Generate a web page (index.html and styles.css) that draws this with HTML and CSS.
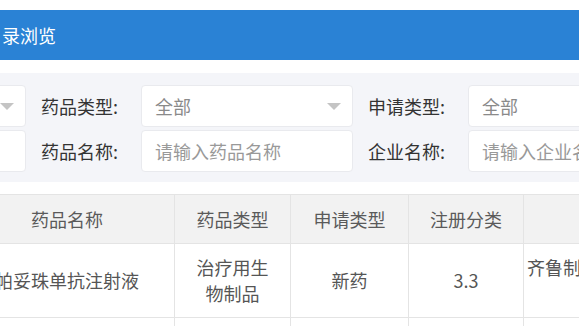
FILE: index.html
```html
<!DOCTYPE html>
<html lang="zh-CN">

<head>
    <meta charset="UTF-8">
    <meta name="viewport" content="width=device-width, initial-scale=1.0">
    <title>药品目录浏览</title>
    <link rel="stylesheet" href="styles.css">
</head>

<body>
    <div class="page">
        <div class="title-bar"><span>药品目录浏览</span></div>

        <div class="filter">
            <div class="filter-row">
                <div class="field">
                    <label>注册分类:</label>
                    <div class="select">全部<svg class="arrow" width="14" height="7" viewBox="0 0 14 7"><path d="M0 0H14L7 7Z" fill="#c4c4c4"/></svg></div>
                </div>
                <div class="field">
                    <label>药品类型:</label>
                    <div class="select">全部<svg class="arrow" width="14" height="7" viewBox="0 0 14 7"><path d="M0 0H14L7 7Z" fill="#c4c4c4"/></svg></div>
                </div>
                <div class="field">
                    <label>申请类型:</label>
                    <div class="select">全部<svg class="arrow" width="14" height="7" viewBox="0 0 14 7"><path d="M0 0H14L7 7Z" fill="#c4c4c4"/></svg></div>
                </div>
            </div>
            <div class="filter-row">
                <div class="field">
                    <label>受理号:</label>
                    <input type="text" placeholder="请输入受理号">
                </div>
                <div class="field">
                    <label>药品名称:</label>
                    <input type="text" placeholder="请输入药品名称">
                </div>
                <div class="field">
                    <label>企业名称:</label>
                    <input type="text" placeholder="请输入企业名称">
                </div>
            </div>
        </div>

        <table class="drug-table">
            <thead>
                <tr>
                    <th class="col-name">药品名称</th>
                    <th class="col-type">药品类型</th>
                    <th class="col-apply">申请类型</th>
                    <th class="col-class">注册分类</th>
                    <th class="col-company">企业名称</th>
                </tr>
            </thead>
            <tbody>
                <tr>
                    <td>帕妥珠单抗注射液</td>
                    <td>治疗用生物制品</td>
                    <td>新药</td>
                    <td>3.3</td>
                    <td class="company">齐鲁制药（海南）有限公司</td>
                </tr>
                <tr>
                    <td>注射用紫杉醇</td>
                    <td>化药</td>
                    <td>仿制</td>
                    <td>4</td>
                    <td class="company">江苏恒瑞医药股份有限公司</td>
                </tr>
            </tbody>
        </table>
    </div>
</body>
</html>
```

FILE: styles.css
```css
html,
body {
    margin: 0;
    padding: 0;
    overflow: hidden;
    background-color: #fff;
}

body {
    font-family: "Noto Sans CJK SC", "Microsoft YaHei", sans-serif;
}

.page {
    width: 1200px;
    margin-left: -41px;
    padding-top: 10px;
}

.title-bar {
    height: 50px;
    line-height: 50px;
    background-color: #2a82d5;
    color: #fff;
    font-size: 18px;
    text-indent: -11px;
}

.filter {
    margin-top: 13px;
    padding: 12px 0 10px;
    background-color: #f4f5f9;
}

.filter-row {
    display: flex;
    margin-left: -260px;
}

.filter-row + .filter-row {
    margin-top: 3px;
}

.field {
    display: flex;
    align-items: center;
}

.field label {
    width: 115px;
    padding-left: 15px;
    box-sizing: border-box;
    font-size: 18px;
    color: #333;
}

.select,
.field input {
    position: relative;
    width: 212px;
    height: 42px;
    padding: 0 13px;
    box-sizing: border-box;
    background-color: #fff;
    border: 1px solid #e9eaee;
    border-radius: 4px;
    font-family: inherit;
    font-size: 18px;
    color: #8a8a8a;
    line-height: 40px;
    outline: none;
}

.field input::placeholder {
    color: #999;
}

.select .arrow {
    position: absolute;
    right: 11px;
    top: 17px;
}

.drug-table {
    margin-top: 12px;
    border-collapse: collapse;
    font-size: 18px;
    color: #555;
}

.drug-table th,
.drug-table td {
    border: 1px solid #e4e4e4;
    text-align: center;
}

.drug-table th {
    height: 48px;
    padding: 0 15px;
    background-color: #f2f2f2;
    font-weight: normal;
    color: #5a5a5a;
}

.drug-table td {
    padding: 10px 15px 11px;
    line-height: 26px;
}

.col-name {
    width: 184px;
}

.col-type {
    width: 85px;
}

.col-apply {
    width: 87px;
}

.col-class {
    width: 84px;
}

.drug-table .col-company,
.drug-table .company {
    width: 182px;
    padding-left: 2px;
    padding-right: 2px;
}
```
